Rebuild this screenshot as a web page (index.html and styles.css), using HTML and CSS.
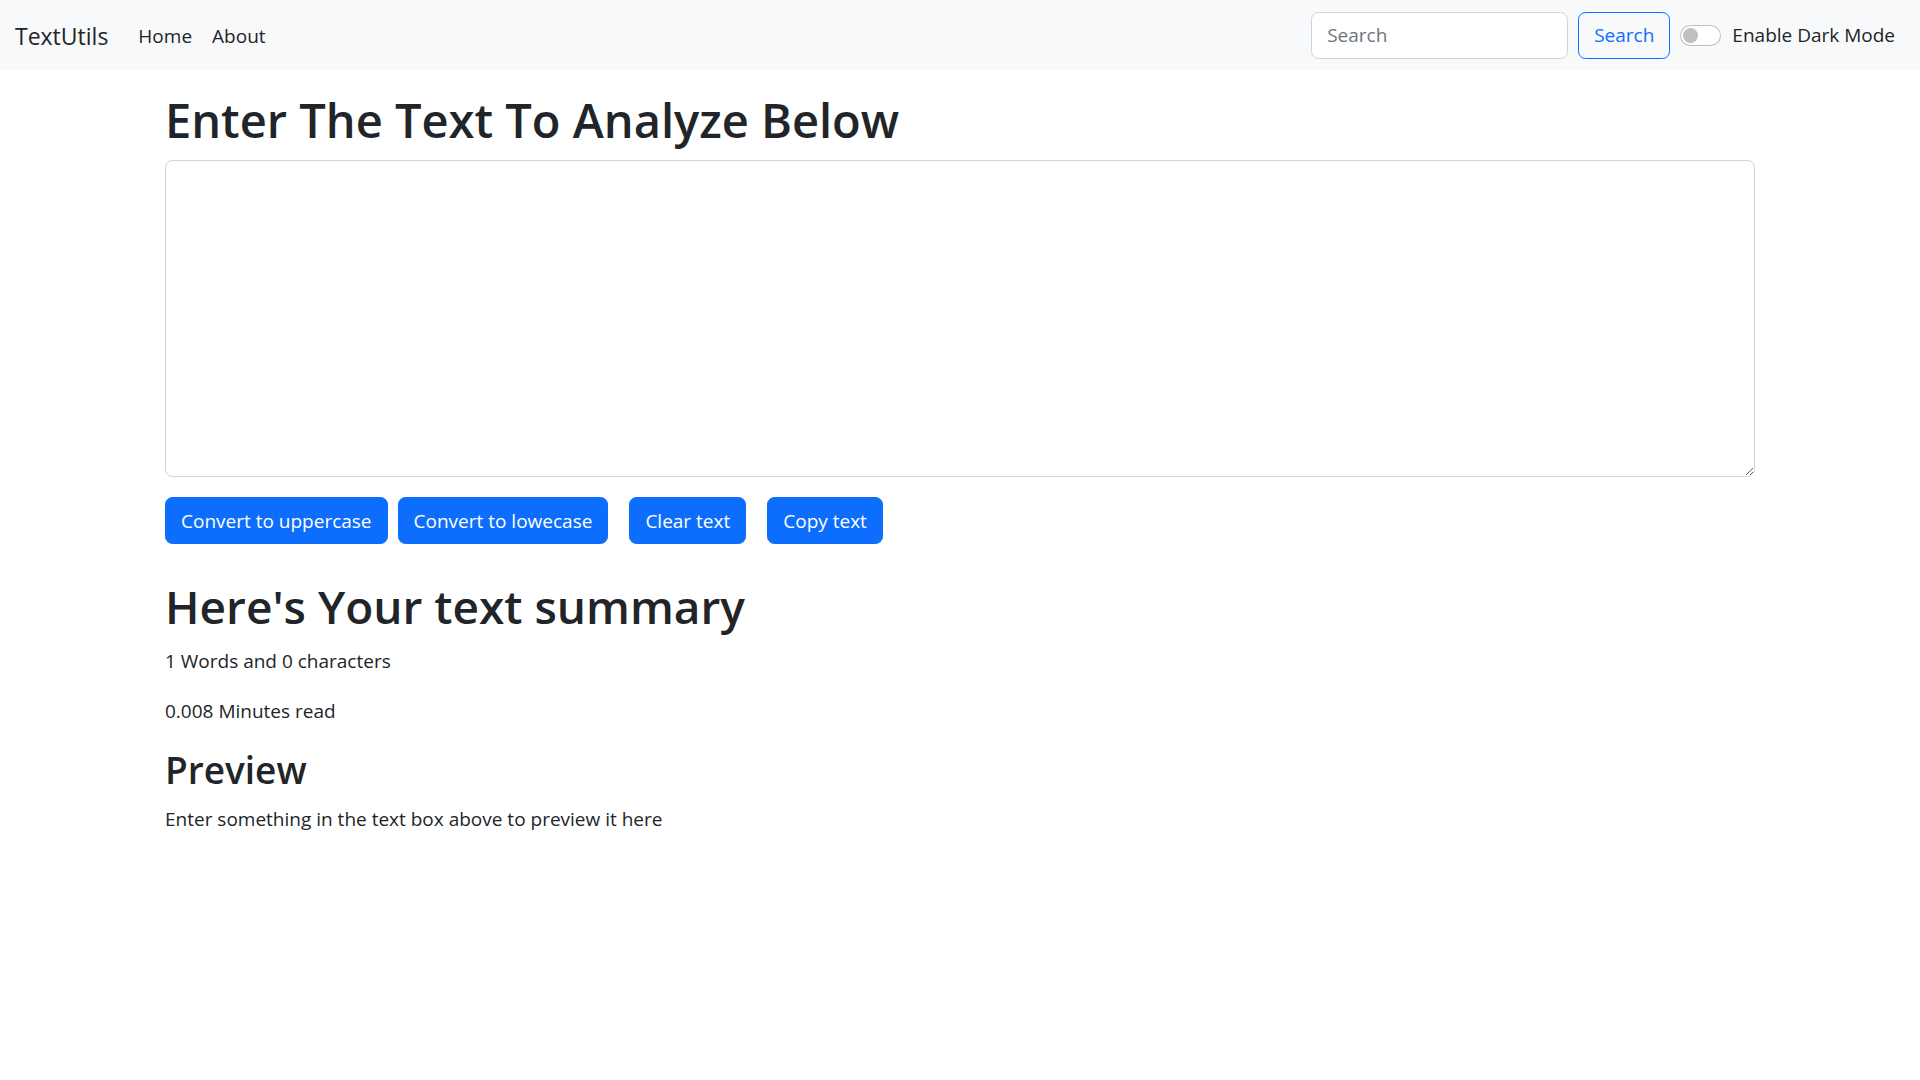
FILE: index.html
```html
<!DOCTYPE html>
<html lang="en">
<head>
<meta charset="utf-8">
<title>TextUtils</title>
<link rel="stylesheet" href="styles.css">
</head>
<body>
<nav class="navbar">
  <div class="nav-left">
    <a class="brand" href="#">TextUtils</a>
    <a class="nav-link" href="#">Home</a>
    <a class="nav-link" href="#">About</a>
  </div>
  <div class="nav-right">
    <input class="search-input" type="search" placeholder="Search">
    <button class="btn-outline">Search</button>
    <label class="switch">
      <span class="switch-track"><span class="switch-knob"></span></span>
      <span class="switch-label">Enable Dark Mode</span>
    </label>
  </div>
</nav>
<main class="container">
  <h1 class="title">Enter The Text To Analyze Below</h1>
  <textarea class="text-box" rows="10"></textarea>
  <div class="actions">
    <button class="btn btn-1">Convert to uppercase</button>
    <button class="btn btn-2">Convert to lowecase</button>
    <button class="btn btn-3">Clear text</button>
    <button class="btn btn-4">Copy text</button>
  </div>
  <h1 class="summary-title">Here's Your text summary</h1>
  <p class="para">1 Words and 0 characters</p>
  <p class="para">0.008 Minutes read</p>
  <h2 class="preview-title">Preview</h2>
  <p class="para">Enter something in the text box above to preview it here</p>
</main>
</body>
</html>
```
FILE: styles.css
```css
* { box-sizing: border-box; }
html, body { margin: 0; padding: 0; }
body {
  font-family: "Open Sans", "Noto Sans", sans-serif;
  font-size: 19px;
  line-height: 30px;
  color: #212529;
  background: #fff;
}
.navbar {
  height: 70px;
  background: #f8f9fa;
  display: flex;
  align-items: center;
  justify-content: space-between;
  padding: 0 15px;
}
.nav-left { display: flex; align-items: center; padding-top: 2px; }
.brand {
  font-size: 23px;
  color: #212529;
  text-decoration: none;
  margin-right: 20px;
  line-height: 1.5;
}
.nav-link {
  color: #212529;
  text-decoration: none;
  padding: 10px;
  font-size: 19px;
}
.nav-right { display: flex; align-items: center; }
.search-input {
  width: 257px;
  height: 47px;
  padding: 7px 15px;
  font: inherit;
  border: 1px solid #ced4da;
  border-radius: 7.5px;
  background: #fff;
  color: #212529;
  outline: none;
}
.search-input::placeholder { color: #6c757d; }
.btn-outline {
  margin-left: 10px;
  height: 47px;
  padding: 7px 15px;
  font: inherit;
  color: #0d6efd;
  background: transparent;
  border: 1px solid #0d6efd;
  border-radius: 7.5px;
}
.switch { display: flex; align-items: center; margin-left: 10px; margin-right: 10px; }
.switch-track {
  width: 41px;
  height: 21px;
  border: 1px solid rgba(0,0,0,0.25);
  border-radius: 11px;
  background: #fff;
  display: flex;
  align-items: center;
  padding-left: 2px;
}
.switch-knob {
  width: 15px;
  height: 15px;
  border-radius: 50%;
  background: #bfbfbf;
}
.switch-label { margin-left: 11px; }
.container {
  width: 1590px;
  margin: 0 auto;
  padding-top: 20px;
}
h1, h2 { font-weight: 600; line-height: 1.2; margin: 0 0 10px; }
.title { font-size: 47px; line-height: 60px; }
.text-box {
  display: block;
  width: 100%;
  height: 317px;
  padding: 7px 15px;
  font: inherit;
  border: 1px solid #ced4da;
  border-radius: 7.5px;
  margin: 0 0 20px;
  resize: vertical;
  outline: none;
}
.actions { display: flex; }
.btn {
  height: 47px;
  padding: 7px 15px;
  font: inherit;
  color: #fff;
  background: #0d6efd;
  border: 1px solid #0d6efd;
  border-radius: 7.5px;
}
.btn-2 { margin-left: 10px; }
.btn-3 { margin-left: 21px; }
.btn-4 { margin-left: 21px; }
.summary-title { font-size: 46px; line-height: 60px; margin-top: 32px; }
.para { margin: 0 0 20px; }
.preview-title { font-size: 37px; line-height: 48px; }
```
